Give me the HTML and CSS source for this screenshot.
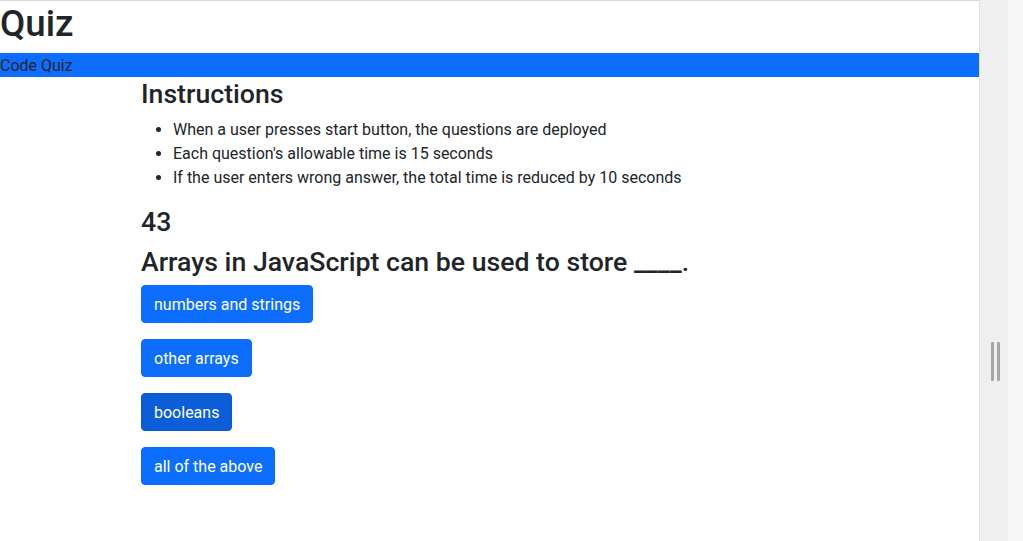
FILE: index.html
```html
<!DOCTYPE html>
<html lang="en">
<head>
<meta charset="utf-8">
<title>Quiz</title>
<link rel="stylesheet" href="styles.css">
</head>
<body>
<div class="shell">
  <main class="frame">
    <h1 class="title">Quiz</h1>
    <div class="navbar">Code Quiz</div>
    <div class="container">
      <h3 class="heading">Instructions</h3>
      <ul class="rules">
        <li>When a user presses start button, the questions are deployed</li>
        <li>Each question's allowable time is 15 seconds</li>
        <li>If the user enters wrong answer, the total time is reduced by 10 seconds</li>
      </ul>
      <h3 class="heading">43</h3>
      <h3 class="heading">Arrays in JavaScript can be used to store ____.</h3>
      <div class="answers">
        <div><button class="btn">numbers and strings</button></div>
        <div><button class="btn">other arrays</button></div>
        <div><button class="btn btn-hover">booleans</button></div>
        <div><button class="btn">all of the above</button></div>
      </div>
    </div>
  </main>
  <aside class="side">
    <div class="grip"><span></span><span></span></div>
    <div class="side-light"></div>
  </aside>
</div>
</body>
</html>
```
FILE: styles.css
```css
*{box-sizing:border-box;}
html,body{margin:0;height:100%;}
body{
  font-family:Roboto,"Liberation Sans",sans-serif;
  font-size:16px;
  line-height:1.5;
  color:#212529;
  background:#fff;
}
.shell{display:flex;height:541px;}
.frame{
  width:979px;
  flex:none;
  border-top:1px solid #dadada;
  background:#fff;
}
.title{
  margin:0 0 8px;
  padding-top:1px;
  height:44px;
  font-size:36.68px;
  font-weight:500;
  line-height:1.2;
}
.navbar{
  background:#0d6efd;
  color:#212529;
  height:24px;
  padding-top:1px;
  line-height:24px;
}
.container{
  width:721px;
  margin:0 auto;
  padding:0 12px;
}
.heading{
  margin:0 0 8px;
  padding-top:1px;
  height:32px;
  font-size:26.67px;
  font-weight:500;
  line-height:1.2;
}
.rules{
  margin:0 0 16px;
  padding-left:32px;
}
.rules li{height:24px;padding-top:1px;}
.answers div{margin-bottom:16px;}
.btn{
  font-family:inherit;
  font-size:16px;
  line-height:1.5;
  height:38px;
  color:#fff;
  background:#0d6efd;
  border:1px solid #0d6efd;
  border-radius:4px;
  padding:7px 12px 5px;
  cursor:pointer;
}
.btn-hover{background:#0b5ed7;border-color:#0a58ca;}
.side{
  flex:1;
  display:flex;
  border-left:1px solid #e2e2e2;
  background:#efefef;
}
.grip{
  width:28px;
  display:flex;
  align-items:flex-start;
  justify-content:center;
  gap:3px;
  padding:342px 0 0 2px;
}
.grip span{
  width:3px;
  height:39px;
  background:#a6a6a6;
  border-radius:1px;
}
.side-light{flex:1;background:#f7f7f7;}
```
